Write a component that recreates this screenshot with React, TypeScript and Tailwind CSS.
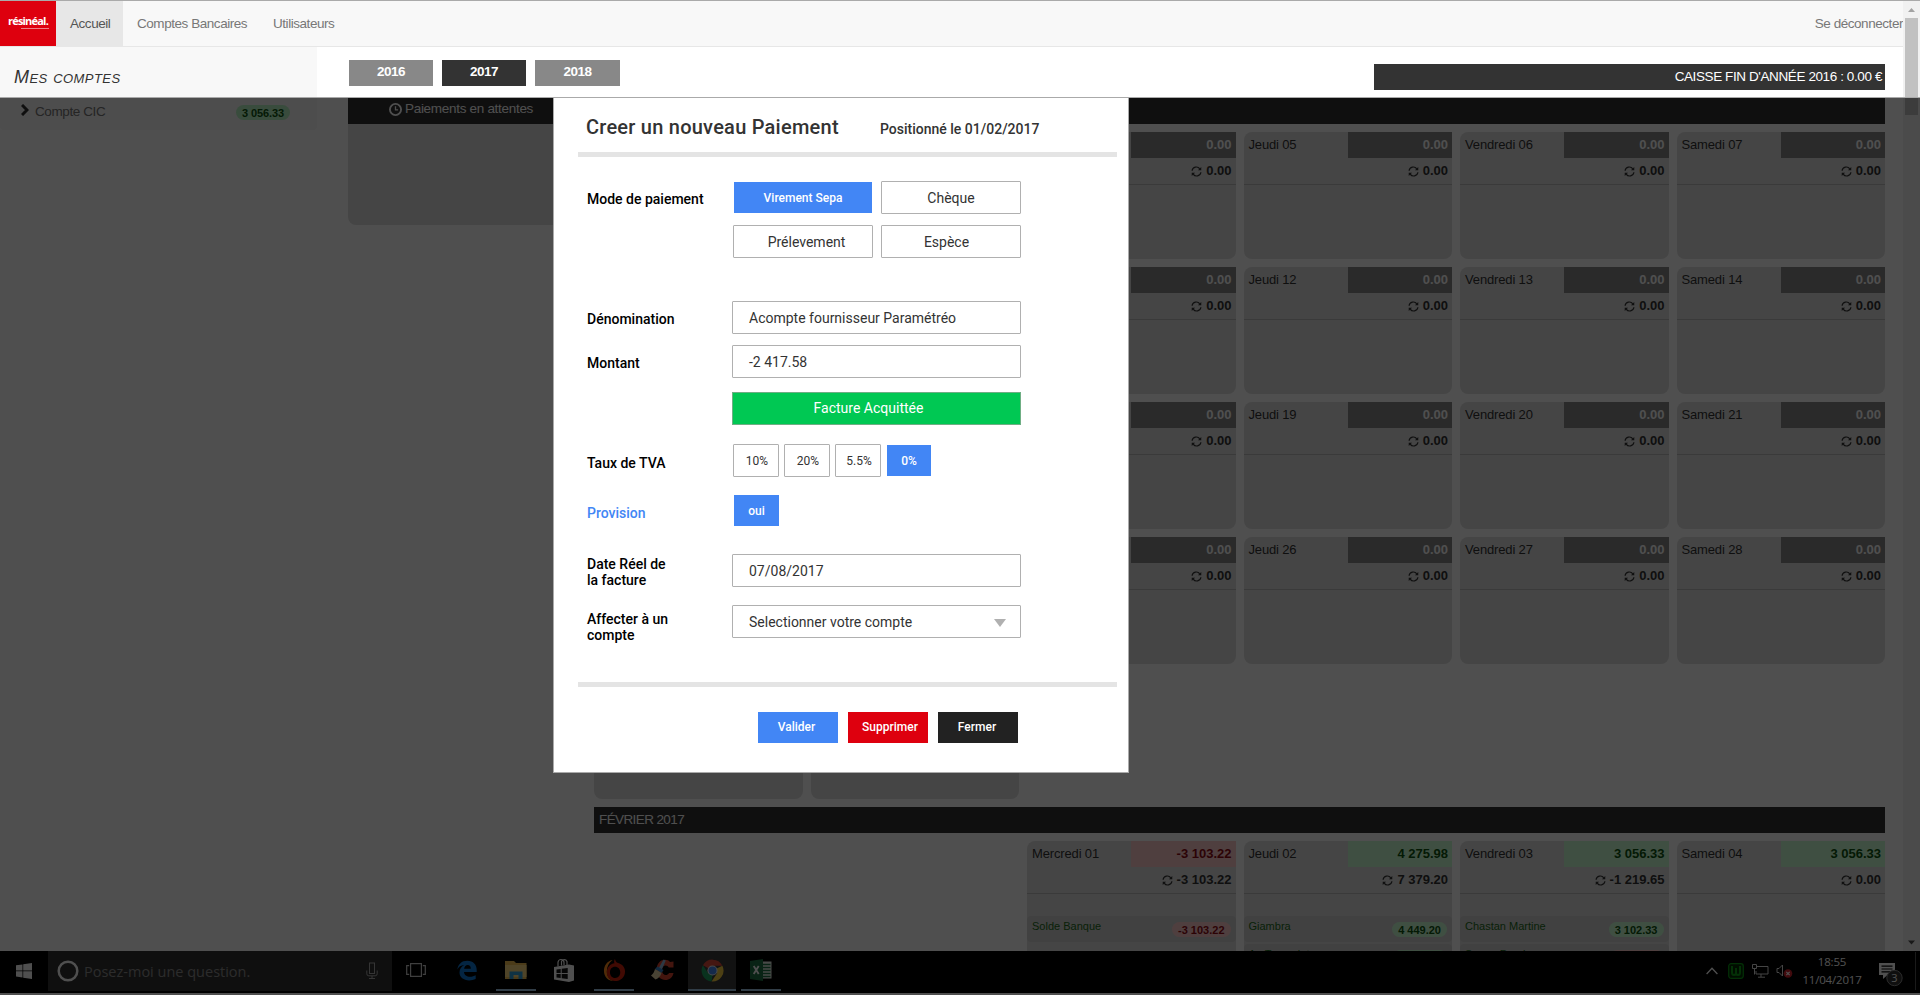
import React from "react";

type Tone = "none" | "green" | "red";
type Entry = { label: string; value: string; tone: Tone };
type Day = { name: string; value: string; total: string; tone: Tone; entries?: Entry[] };
type Slot = Day | "blank" | null;

const TONE: Record<Tone, string> = {
  none: "bg-[#888] text-[#fff]",
  green: "bg-[#cbffd5] text-[#0e5410]",
  red: "bg-[#ffcbcb] text-[#8f0a14]",
};

const empty = (name: string): Day => ({ name, value: "0.00", total: "0.00", tone: "none" });

// The dialog covers the start of each January week, so those slots stay blank.
const week = (thursday: string, friday: string, saturday: string): Slot[] => [
  "blank",
  "blank",
  empty(""),
  empty(`Jeudi ${thursday}`),
  empty(`Vendredi ${friday}`),
  empty(`Samedi ${saturday}`),
];

const january: Slot[][] = [
  week("05", "06", "07"),
  week("12", "13", "14"),
  week("19", "20", "21"),
  week("26", "27", "28"),
  ["blank", "blank", null, null, null, null],
];

const february: Slot[] = [
  null,
  null,
  {
    name: "Mercredi 01",
    value: "-3 103.22",
    total: "-3 103.22",
    tone: "red",
    entries: [{ label: "Solde Banque", value: "-3 103.22", tone: "red" }],
  },
  {
    name: "Jeudi 02",
    value: "4 275.98",
    total: "7 379.20",
    tone: "green",
    entries: [
      { label: "Giambra", value: "4 449.20", tone: "green" },
      { label: "Au Toomalats", value: "", tone: "green" },
    ],
  },
  {
    name: "Vendredi 03",
    value: "3 056.33",
    total: "-1 219.65",
    tone: "green",
    entries: [
      { label: "Chastan Martine", value: "3 102.33", tone: "green" },
      { label: "Suppo Damien", value: "", tone: "red" },
    ],
  },
  { name: "Samedi 04", value: "3 056.33", total: "0.00", tone: "green" },
];

function Sync() {
  return (
    <svg viewBox="0 0 12 12" className="h-[11px] w-[11px]" fill="none" stroke="currentColor" strokeWidth="1.3">
      <path d="M1.2 5.2A4.6 4.6 0 0 1 9.6 3.2M10.8 6.8A4.6 4.6 0 0 1 2.4 8.8" />
      <path d="M11.2 1v3.6H7.6zM.8 11V7.4h3.6z" fill="currentColor" stroke="none" />
    </svg>
  );
}

function DayCell({ day }: { day: Slot }) {
  if (!day) return <div />;
  if (day === "blank") return <div className="h-[127px] rounded-lg bg-[#dfdfdf]" />;
  return (
    <div className="h-[127px] rounded-lg bg-[#dfdfdf] text-[#333]">
      <div className="flex h-[26px] text-[13px] leading-[25px]">
        <div className="w-1/2 whitespace-nowrap pl-[5px] tracking-[-0.15px]">{day.name}</div>
        <div className={`w-1/2 pr-1 text-right font-bold ${TONE[day.tone]}`}>{day.value}</div>
      </div>
      <div className="flex h-[27px] items-center justify-end gap-1 border-b border-[#bbb] pr-1 text-[13px] font-bold">
        <Sync />
        {day.total}
      </div>
      {day.entries && (
        <div className="flex flex-col gap-[2px] pt-[22px]">
          {day.entries.map((e) => (
            <div key={e.label} className="flex h-[26px] justify-between rounded bg-[#d2d2d2] pl-[5px] pr-[5px] text-[11px]">
              <span className="leading-[21px] text-[#1d6b20]">{e.label}</span>
              <span
                className={`mt-[6px] h-[15px] min-w-[54px] rounded-full px-[6px] text-center font-bold leading-[16px] ${TONE[e.tone]}`}
              >
                {e.value}
              </span>
            </div>
          ))}
        </div>
      )}
    </div>
  );
}

function Week({ days }: { days: Slot[] }) {
  return (
    <div className="grid h-[127px] grid-cols-6 gap-x-2">
      {days.map((d, i) => (
        <DayCell key={i} day={d} />
      ))}
    </div>
  );
}

function NavBar() {
  return (
    <header className="flex h-[47px] shrink-0 border-b border-t border-b-[#e7e7e7] border-t-[#aaa] bg-[#f8f8f8] text-[13.5px] leading-[45px] tracking-[-0.45px] text-[#777]">
      <div className="flex w-14 flex-col items-center bg-[#de000e] pt-[13px] text-white">
        <span className="font-['Open_Sans'] text-[11px] font-bold leading-[13px] tracking-[-0.8px]">résinéal.</span>
        <span className="ml-[14px] mt-px h-px w-7 bg-[#ee8087]" />
      </div>
      <div className="w-[67px] bg-[#e7e7e7] pl-[14px] text-[#555]">Accueil</div>
      <div className="w-[136px] pl-[14px]">Comptes Bancaires</div>
      <div className="pl-[14px]">Utilisateurs</div>
      <div className="ml-auto">Se déconnecter</div>
    </header>
  );
}

function Sidebar() {
  return (
    <aside className="h-[83px] w-[317px] shrink-0 rounded-b bg-[#f8f8f8]">
      <h2 className="h-[51px] pl-[14px] pt-[18px] text-[18px] italic leading-6 tracking-[0.45px] text-[#333] [font-variant:small-caps]">
        Mes comptes
      </h2>
      <div className="flex items-center pl-[21px] pr-[27px] text-[13.5px] tracking-[-0.4px] text-[#777]">
        <svg viewBox="0 0 8 12" className="mb-1 mr-[6px] h-3 w-2" fill="none" stroke="#333" strokeWidth="3">
          <path d="M1 1l5 5-5 5" />
        </svg>
        <span className="leading-[27px]">Compte CIC</span>
        <span className="ml-auto mt-[2px] h-[15px] rounded-full bg-[#b9f5c4] px-[6px] text-[11px] font-bold leading-[16px] tracking-[-0.1px] text-[#0e5410]">
          3 056.33
        </span>
      </div>
    </aside>
  );
}

function YearTabs() {
  return (
    <div className="ml-px flex gap-[9px] text-[13.5px] font-bold leading-[24px] tracking-[-0.5px] text-white">
      <div className="h-[26px] w-[84px] bg-[#888] text-center">2016</div>
      <div className="h-[26px] w-[84px] bg-[#333] text-center">2017</div>
      <div className="h-[26px] w-[85px] bg-[#888] text-center">2018</div>
    </div>
  );
}

function Planning() {
  return (
    <main className="flex w-[1537px] shrink-0 flex-col pt-[13px]">
      <div className="flex justify-between">
        <YearTabs />
        <div className="mt-[4px] h-[26px] w-[511px] bg-[#333] pr-[3px] text-right text-[13.5px] leading-[25px] tracking-[-0.4px] text-white">
          CAISSE FIN D'ANNÉE 2016 : 0.00 €
        </div>
      </div>
      <div className="mt-2 flex justify-between">
        <section className="h-[127px] w-[238px] rounded-b-lg bg-[#dfdfdf]">
          <div className="flex h-[26px] items-center gap-[3px] bg-[#333] pb-[3px] pl-[41px] text-[13.5px] tracking-[-0.3px] text-[#fff]">
            <svg viewBox="0 0 14 14" className="h-[13px] w-[13px]" fill="none" stroke="currentColor" strokeWidth="2">
              <circle cx="7" cy="7" r="6" />
              <path d="M7 3.5V7.3H9.8" strokeWidth="1.4" />
            </svg>
            Paiements en attentes
          </div>
        </section>
        <section className="w-[1291px]">
          <div className="h-[26px] bg-[#333]" />
          <div className="mt-2 flex flex-col gap-2">
            {january.map((w, i) => (
              <Week key={i} days={w} />
            ))}
            <div className="h-[26px] bg-[#333] pl-[5px] text-[13.5px] leading-[25px] tracking-[-0.6px] text-[#fff]">
              FÉVRIER 2017
            </div>
            <Week days={february} />
          </div>
        </section>
      </div>
    </main>
  );
}

function ScrollBar() {
  return (
    <div className="flex h-full w-[17px] shrink-0 flex-col items-center border-t border-[#aaa] bg-[#f1f1f1]">
      <svg viewBox="0 0 17 17" className="h-[17px] w-[17px]" fill="#a3a3a3">
        <path d="M5 11h7L8.500 7z" />
      </svg>
      <div className="h-[97px] w-[13px] bg-[#c1c1c1]" />
      <svg viewBox="0 0 17 17" className="mt-auto h-[17px] w-[17px]" fill="#505050">
        <path d="M5 6.500h7L8.500 10.500z" />
      </svg>
    </div>
  );
}

function WindowsLogo() {
  return (
    <svg viewBox="0 0 16 16" className="h-4 w-4" fill="#fff">
      <path d="M0 2.300l6.500-.9v6.200H0zM7.200 1.300L16 0v7.600H7.200zM0 8.300h6.500v6.200L0 13.600zM7.200 8.300H16V16l-8.800-1.300z" />
    </svg>
  );
}

function TaskApp({ children, state }: { children: React.ReactNode; state?: "open" | "active" }) {
  const look =
    state === "active"
      ? "w-12 border-b-2 border-[#9fc6e4] bg-[#3a3a3a]"
      : state === "open"
        ? "w-10 mx-1 border-b-2 border-[#9fc6e4]"
        : "w-10 mx-1 border-b-2 border-transparent";
  return <div className={`flex h-[40px] items-center justify-center ${look}`}>{children}</div>;
}

function TaskBar() {
  return (
    <footer className="flex h-[42px] shrink-0 bg-black text-[#fff]">
      <div className="flex w-12 items-center justify-center pb-[2px]">
        <WindowsLogo />
      </div>
      <div className="flex h-[40px] w-[344px] items-center bg-[#333] pl-[9px] pr-[14px]">
        <svg viewBox="0 0 22 22" className="h-[22px] w-[22px]" fill="none" stroke="#fff">
          <circle cx="11" cy="11" r="9.300" strokeWidth="2.500" />
        </svg>
        <span className="ml-[5px] mt-px font-['Open_Sans'] text-[14.5px] text-[#8e8e8e]">Posez-moi une question.</span>
        <svg viewBox="0 0 12 18" className="ml-auto h-[18px] w-3" fill="none" stroke="#aaa">
          <rect x="3.500" y="1" width="5" height="10.500" />
          <path d="M.8 8.500v3.300q0 2 2 2h6.400q2 0 2-2V8.500M6 14v2.500M3 16.500h6" />
        </svg>
      </div>
      <div className="flex">
        <TaskApp>
          <svg viewBox="0 0 20 14" className="h-[14px] w-5" fill="none" stroke="#ccc" strokeWidth="1.200">
            <path d="M4.600.6h10.800v12.800H4.600zM3.200 2.600H.7v8.800h2.500M16.800 2.600h2.500v8.800h-2.500" />
          </svg>
        </TaskApp>
        <div className="w-[3px]" />
        <TaskApp>
          <svg viewBox="0 0 20 20" className="h-[21px] w-[20px]" fill="#0e78d4">
            <path d="M.3 9.100C1 3.600 4.700.2 10.300.2c6 0 9.500 4.200 9.400 9.300v2H7c.1 3.200 2.900 4.700 6.100 4.700 2.100 0 4-.6 5.600-1.500v3.900c-2 .9-4.100 1.300-6.500 1.300-5.700 0-9.700-3-9.700-7.800 0-3.500 1.900-6 4.900-7.500C3.800 4.800 1.600 6.500.3 9.100zM7.100 8.200h6.700c0-2.600-1.100-3.800-3.100-3.800-1.900 0-3.200 1.400-3.600 3.800z" />
          </svg>
        </TaskApp>
        <div className="w-px" />
        <TaskApp state="open">
          <svg viewBox="0 0 22 20" className="h-5 w-[22px]">
            <path d="M0 1h9l2 2h10.500v16H0z" fill="#f0bf52" />
            <path d="M0 5h21.500v12H0z" fill="#ffdc80" />
            <path d="M4.500 11.500h13V19h-4v-4h-5v4h-4z" fill="#33a0dc" />
          </svg>
        </TaskApp>
        <TaskApp>
          <svg viewBox="0 0 22 24" className="h-6 w-[22px]">
            <path d="M1 9l15-2.500 5 1v15L16 24 1 21.500z" fill="#fff" />
            <path d="M5 8.500V4.500a3 3 0 0 1 6 0V7M8.500 7.500V3.500a3 3 0 0 1 5.500 0V7" fill="none" stroke="#fff" strokeWidth="1.200" />
            <path d="M3.500 11.500l4.200-.6v4H3.500zM8.700 10.700l6-.8v5h-6zM3.500 16h4.200v4l-4.200-.6zM8.700 16h6v5l-6-.8z" fill="#111" />
          </svg>
        </TaskApp>
        <div className="w-[2px]" />
        <TaskApp state="open">
          <svg viewBox="0 0 24 24" className="h-[23px] w-[23px]">
            <path d="M10 1C4 2 1 7 1 12.500 1 18.500 5.500 23 11 23c-4-1.500-7-5-7-10C4 8 6 4 10 1z" fill="#ff8c1a" />
            <path
              d="M12.500 0c.3 2 1.300 3.500 3.200 4.300C20 5.700 23 8.500 23 13c0 6-4.500 10-10.500 10C7.500 23 4 19 4 14.200 4 9 7.500 5 12 4.500c-.7-1.500-.5-3 .5-4.500zM12.500 8c-3.200 0-5.200 2.400-5.200 5.700 0 3.500 2.100 6 5.400 6 3.200 0 5.300-2.500 5.300-5.800 0-3.400-2.200-5.900-5.500-5.900z"
              fill="#d0200c"
              fillRule="evenodd"
            />
          </svg>
        </TaskApp>
        <TaskApp>
          <svg viewBox="0 0 24 24" className="h-6 w-6">
            <path d="M23.500 3.500v6h-4.700C17.500 6.500 12 6.500 12 12s5 6.500 7 3h4.500c-1.500 10-17 9.500-17-3C6.500 1 17-.5 20 4z" fill="#d8442f" />
            <path d="M13.500 1.500l2.300 1-4 9-3-1.500z" fill="#8fb7dc" />
            <path d="M7.500 8.500l6 3.500-2 3-6.500-4z" fill="#3583c7" />
            <path d="M5 11l6.500 4c-1 3-3 5.500-6 6.500L1 17.500c2-1.500 3.500-4 4-6.500z" fill="#ecd9a8" />
          </svg>
        </TaskApp>
        <div className="w-[2px]" />
        <TaskApp state="active">
          <svg viewBox="0 0 24 24" className="h-[23px] w-[23px]">
            <path d="M12 12L2 6.500A11.500 11.500 0 0 1 22.300 7H12z" fill="#de4b3c" />
            <path d="M12 12l10.300-5A11.500 11.500 0 0 1 11 23.500l6-9z" fill="#f7cd43" />
            <path d="M2 6.500l5.300 8.200L12 17l-1 6.500A11.500 11.500 0 0 1 2 6.500z" fill="#1da260" />
            <circle cx="12" cy="12" r="5.300" fill="#eee" />
            <circle cx="12" cy="12" r="4.200" fill="#4688f0" />
          </svg>
        </TaskApp>
        <div className="w-px" />
        <TaskApp state="open">
          <svg viewBox="0 0 22 22" className="h-[22px] w-[22px]">
            <rect x="11" y="2.500" width="10.500" height="17" fill="#e8efe9" />
            <path d="M13 5.500h7.500M13 8.500h7.500M13 11.500h7.500M13 14.500h7.500M13 17.500h7.500" stroke="#1f7244" strokeWidth="1.500" />
            <path d="M0 2l13-2v22L0 20z" fill="#1f7244" />
            <path d="M3.700 7l5 8M8.700 7l-5 8" stroke="#fff" strokeWidth="1.800" />
          </svg>
        </TaskApp>
      </div>
      <div className="ml-auto flex h-[40px] items-center">
        <svg viewBox="0 0 12 8" className="h-2 w-3" fill="none" stroke="#fff" strokeWidth="1.300">
          <path d="M.6 7L6 1.300 11.400 7" />
        </svg>
        <svg viewBox="0 0 16 16" className="ml-[10px] h-4 w-4">
          <rect x=".7" y=".7" width="14.600" height="14.600" rx="2.500" fill="#032b03" stroke="#0a9a14" strokeWidth="1.200" />
          <path d="M4 3v6.500q0 2.500 2 2.500t2-2.500V5M8 9.500q0 2.500 2 2.500t2-2.500V3" fill="none" stroke="#0a9a14" strokeWidth="2" />
        </svg>
        <svg viewBox="0 0 17 14" className="ml-2 h-[14px] w-[17px]" fill="none" stroke="#ddd">
          <path d="M5 2.500h11v7.500H4V7M9 10v3M6 13.200h7M.5.500h4v4h-4zM2.500 4.500v6" />
        </svg>
        <svg viewBox="0 0 17 14" className="ml-[7px] h-[14px] w-[17px]">
          <path d="M1 4.500h2L6.500 1v11L3 8.500H1z" fill="none" stroke="#ddd" />
          <circle cx="12" cy="9.500" r="4.300" fill="#d3222a" />
          <path d="M10.300 7.800l3.400 3.400M13.700 7.800l-3.400 3.400" stroke="#fff" strokeWidth="1.200" />
        </svg>
        <div className="ml-[9px] w-[60px] text-center font-['Open_Sans'] text-[11.500px] leading-[18px] tracking-[-0.200px]">
          <div>18:55</div>
          <div>11/04/2017</div>
        </div>
        <svg viewBox="0 0 26 26" className="ml-[16px] mt-[5px] h-[26px] w-[26px]">
          <path d="M1 2h16v12H9.500L5 18v-4H1z" fill="#fff" />
          <path d="M3.500 5.200h11M3.500 8h11M3.500 10.800h11" stroke="#000" strokeWidth="1.200" />
          <circle cx="16.500" cy="17" r="7.700" fill="#333" stroke="#888" />
          <text x="16.500" y="21" textAnchor="middle" fontSize="11" fill="#fff" fontFamily="Open Sans">
            3
          </text>
        </svg>
        <div className="ml-[11px] mr-1 h-[38px] w-px bg-[#555]" />
      </div>
    </footer>
  );
}

function Label({ children, className }: { children: React.ReactNode; className?: string }) {
  return <div className={`w-[147px] shrink-0 pl-px font-medium leading-4 ${className ?? ""}`}>{children}</div>;
}

const FIELD = "flex h-[33px] w-[289px] items-center rounded-[1px] border border-[#b0b0b0] pl-4 pt-px";
const CHOICE = "flex h-[33px] w-[140px] items-center justify-center rounded-[1px] border border-[#b0b0b0] pt-px";
const RATE =
  "flex h-[33px] w-[46px] items-center justify-center rounded-[1px] border border-[#b0b0b0] pl-[2px] text-xs";

function PaymentDialog() {
  return (
    <div className="absolute left-[553px] top-[97px] flex h-[676px] w-[576px] flex-col border border-[#aaa] bg-white pl-6 font-['Roboto'] text-sm text-[#333]">
      <div className="flex h-[54px] items-baseline pl-[8px] pt-[14px] font-medium">
        <h1 className="w-[294px] text-[20px] leading-[30px] tracking-[0.24px]">Creer un nouveau Paiement</h1>
        <span>Positionné le 01/02/2017</span>
      </div>
      <div className="h-[5px] w-[539px] bg-[#e4e4e4]" />

      <div className="flex flex-col pl-[8px]">
        <div className="mt-6 flex text-black">
          <Label className="mt-[10px]">Mode de paiement</Label>
          <div className="grid grid-cols-[140px_140px] gap-x-2 gap-y-[11px] text-[#333]">
            <div className="m-px flex h-[31px] items-center justify-center bg-[#4286f5] text-xs font-medium text-white">
              Virement Sepa
            </div>
            <div className={CHOICE}>Chèque</div>
            <div className={`${CHOICE} pl-[7px]`}>Prélevement</div>
            <div className={`${CHOICE} pr-[9px]`}>Espèce</div>
          </div>
        </div>

        <div className="mt-[43px] flex text-black">
          <Label className="mt-[10px]">Dénomination</Label>
          <div className={`${FIELD} -ml-px text-[#333]`}>Acompte fournisseur Paramétréo</div>
        </div>
        <div className="mt-[11px] flex text-black">
          <Label className="mt-[10px]">Montant</Label>
          <div className={`${FIELD} -ml-px text-[#333]`}>-2 417.58</div>
        </div>
        <div className="ml-[146px] mt-[14px] flex h-[33px] w-[289px] items-center justify-center border border-[#6fae84] bg-[#00c853] pb-px pr-4 text-white">
          Facture Acquittée
        </div>

        <div className="mt-[19px] flex text-black">
          <Label className="mt-[11px]">Taux de TVA</Label>
          <div className="flex gap-[5px] text-[#333]">
            <div className={RATE}>10%</div>
            <div className={RATE}>20%</div>
            <div className={RATE}>5.5%</div>
            <div className="my-px ml-px flex h-[31px] w-[44px] items-center justify-center bg-[#4286f5] text-xs font-medium text-white">
              0%
            </div>
          </div>
        </div>

        <div className="mt-[18px] flex">
          <Label className="mt-[10px] text-[#4286f5]">Provision</Label>
          <div className="ml-px flex h-[31px] w-[45px] items-center justify-center bg-[#4286f5] text-xs font-medium text-white">
            oui
          </div>
        </div>

        <div className="mt-[28px] flex text-black">
          <Label className="mt-[2px]">
            Date Réel de
            <br />
            la facture
          </Label>
          <div className={`${FIELD} -ml-px text-[#333]`}>07/08/2017</div>
        </div>
        <div className="mt-[17px] flex text-black">
          <Label className="mt-[6px]">
            Affecter à un
            <br />
            compte
          </Label>
          <div className={`${FIELD} -ml-px justify-between pr-[14px] text-[#333]`}>
            Selectionner votre compte
            <svg viewBox="0 0 12 8" className="mt-px h-2 w-3" fill="#b0b0b0">
              <path d="M0 0h12L6 8z" />
            </svg>
          </div>
        </div>
      </div>

      <div className="mt-[39px] h-[5px] w-[539px] bg-[#e4e4e4]" />
      <div className="ml-[180px] mt-[25px] flex gap-[10px] text-xs font-medium leading-[31px] text-white">
        <div className="h-[31px] w-20 bg-[#4286f5] pr-[3px] text-center">Valider</div>
        <div className="h-[31px] w-20 bg-[#de000e] pl-[4px] text-center">Supprimer</div>
        <div className="h-[31px] w-20 bg-[#222] pr-[2px] text-center">Fermer</div>
      </div>
    </div>
  );
}

export default function App() {
  return (
    <div className="relative flex h-[995px] w-[1920px] flex-col overflow-hidden bg-white font-['Liberation_Sans',Arial,sans-serif]">
      <div className="flex h-[951px] shrink-0">
        <div className="flex min-w-0 flex-1 flex-col overflow-hidden">
          <NavBar />
          <div className="flex min-h-0 flex-1 gap-[31px] overflow-hidden">
            <Sidebar />
            <Planning />
          </div>
        </div>
        <ScrollBar />
      </div>
      <TaskBar />
      <div className="absolute inset-x-0 bottom-0 top-[97px] border-t border-[#aaa] bg-black/69" />
      <PaymentDialog />
    </div>
  );
}
